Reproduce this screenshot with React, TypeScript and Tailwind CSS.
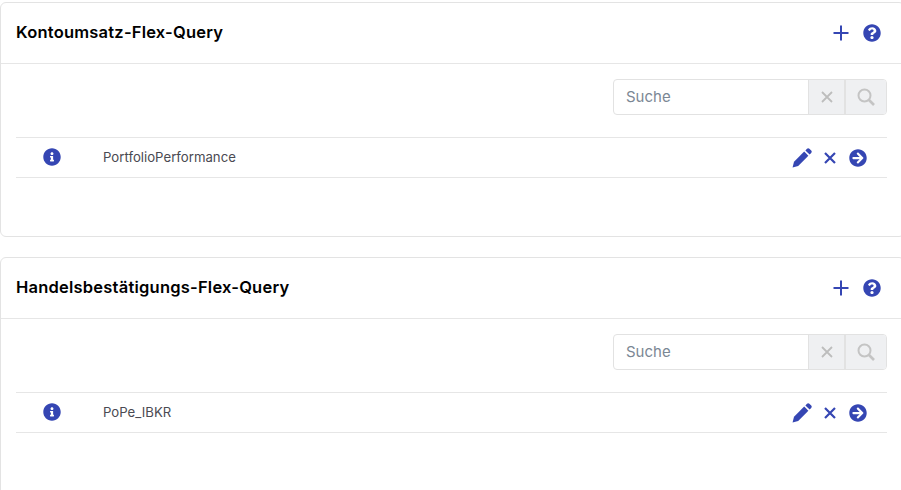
import React from "react";
import { FaQuestionCircle, FaInfoCircle, FaArrowCircleRight } from "react-icons/fa";

function Cross({ className, width }: { className: string; width: number }) {
  return (
    <svg viewBox="0 0 12 12" className={className} fill="none" stroke="currentColor" strokeWidth={width}>
      <path d="M1 1L11 11M11 1L1 11" />
    </svg>
  );
}

function Card({ title, name, last }: { title: string; name: string; last?: boolean }) {
  return (
    <section className={`bg-white border border-[#e3e3e3] rounded-[6px] w-[905px] ${last ? "h-[260px]" : "h-[235px] mb-[20px]"}`}>
      <header className="h-[60px] border-b border-[#e6e6e6] box-content flex items-center pl-[15px] pr-[19px]">
        <h2 className="flex-1 text-[16.5px] leading-[24px] font-semibold text-black mb-[2px] tracking-[0.22px]">{title}</h2>
        <svg viewBox="0 0 16 16" className="text-[#3546b3] w-[16px] h-[16px] mr-[14px]" fill="none" stroke="currentColor" strokeWidth={2}>
          <path d="M8 0.5V15.5M0.5 8H15.5" />
        </svg>
        <FaQuestionCircle className="text-[#3546b3] w-[18px] h-[18px] mr-[4px]" />
      </header>
      <div className="pl-[15px] w-[886px]">
        <div className="flex justify-end pt-[15px] pb-[22px]">
          <div className="flex h-[36px] w-[274px] border border-[#e2e2e2] rounded-[4px] overflow-hidden">
            <div className="flex-1 flex items-center pl-[12px] text-[15px] text-[#7b8794]">Suche</div>
            <div className="w-[37px] bg-[#eff0f2] border-x border-[#e2e2e2] flex items-center justify-center">
              <Cross className="text-[#bdbdbd] w-[12px] h-[12px]" width={1.8} />
            </div>
            <div className="w-[41px] bg-[#eff0f2] border-l border-[#e2e2e2] flex items-center justify-center">
              <svg viewBox="0 0 18 18" className="text-[#c4c4c4] w-[18px] h-[18px]" fill="none" stroke="currentColor" strokeWidth={2}>
                <circle cx="7.5" cy="7.5" r="6" />
                <path d="M12 12L17 17" strokeWidth={2.6} />
              </svg>
            </div>
          </div>
        </div>
        <div className="h-[41px] border-y border-[#e6e6e6] flex items-center">
          <div className="w-[87px] pl-[27px] shrink-0">
            <FaInfoCircle className="text-[#3546b3] w-[18px] h-[18px] mb-[1px]" />
          </div>
          <span className="flex-1 text-[13.2px] text-[#4a4a52]">{name}</span>
          <div className="flex items-center pr-[20px]">
            <svg viewBox="0 0 20 20" className="text-[#3546b3] w-[20px] h-[20px] mr-[12px]" fill="currentColor">
              <path d="M12.2 3.6L16.4 7.8L6.2 18L0.6 19.4L2 13.8Z" />
              <path d="M13.4 2.4L15 0.8C15.7 0.1 16.7 0.1 17.4 0.8L19.2 2.6C19.9 3.3 19.9 4.3 19.2 5L17.6 6.6Z" />
            </svg>
            <Cross className="text-[#3546b3] w-[12px] h-[12px] mr-[13px]" width={2.2} />
            <FaArrowCircleRight className="text-[#3546b3] w-[18px] h-[18px]" />
          </div>
        </div>
      </div>
    </section>
  );
}

export default function App() {
  return (
    <div className="w-[901px] h-[490px] overflow-hidden bg-white pt-[2px]" style={{ fontFamily: "Inter, 'Liberation Sans', sans-serif" }}>
      <Card title="Kontoumsatz-Flex-Query" name="PortfolioPerformance" />
      <Card title="Handelsbestätigungs-Flex-Query" name="PoPe_IBKR" last />
    </div>
  );
}
